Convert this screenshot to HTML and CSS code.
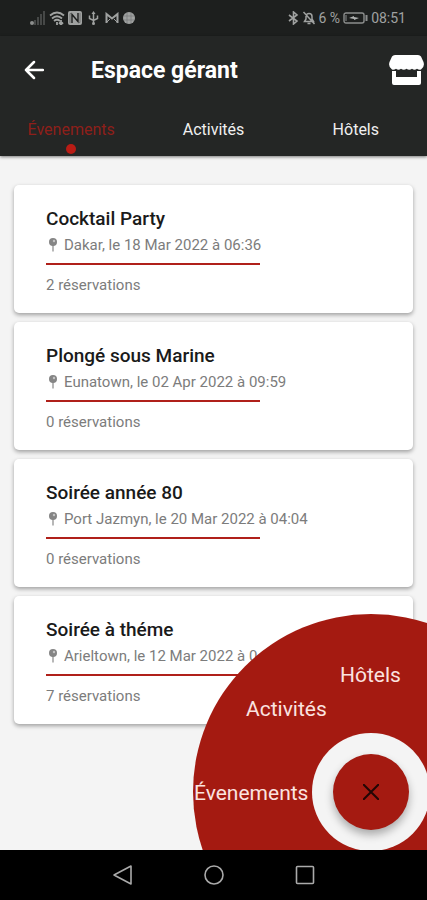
FILE: index.html
```html
<!DOCTYPE html>
<html lang="fr">
  <head>
    <meta charset="utf-8">
    <meta name="viewport" content="width=device-width, initial-scale=1">
    <title>Espace gérant</title>
    <link rel="stylesheet" href="styles.css">
  </head>
  <body>
    <div class="status-bar">
      <div class="status-group">
        <svg width="16" height="14" viewBox="0 0 16 14"><g fill="#464847"><rect x="4" y="9" width="2" height="5"/><rect x="7" y="6" width="2" height="8"/><rect x="10" y="3" width="2" height="11"/><rect x="13" y="0" width="2" height="14"/></g><circle cx="2" cy="12" r="2" fill="#8c8e8d"/></svg>
        <svg width="16" height="14" viewBox="0 0 16 14" fill="none" stroke="#a0a2a1" stroke-width="1.800"><path d="M1 4.500q7-6 14 0M3 7.500q5-4.500 10 0M5 10q3-2.500 6 0"/><path d="M8 11v3M12 9v4.500m-2-2 2 2 2-2"/></svg>
        <svg width="14" height="14" viewBox="0 0 14 14"><rect width="14" height="14" rx="2" fill="#a0a2a1"/><path d="M4 12V3.500l6 7V2" fill="none" stroke="#1d1f1e" stroke-width="1.400"/><path d="M2 12V2.500h2M12 2v9.500h-2" fill="none" stroke="#5c5e5d" stroke-width=".7"/></svg>
        <svg class="usb" width="11" height="14" viewBox="0 0 11 14" fill="none" stroke="#a0a2a1" stroke-width="1.500"><path d="M5.500 2v10M1.500 4.500v3l4 2 4-2v-3"/><path d="M3.500 3l2-3 2 3z" fill="#a0a2a1" stroke="none"/><circle cx="5.500" cy="12.500" r="1.500" fill="#a0a2a1" stroke="none"/></svg>
        <svg class="mail" width="14" height="12" viewBox="0 0 14 12" fill="none" stroke="#a0a2a1" stroke-width="2"><path d="M1.500 11V2L7 6.500 12.500 2v9"/><path d="M1 11l4-4M13 11L9 7" stroke-width="1"/></svg>
        <svg width="12" height="12" viewBox="0 0 12 12"><circle cx="6" cy="6" r="6" fill="#a0a2a1"/><path d="M1 4h10M1 8h10M4 1v10M8 1v10" stroke="#777978" stroke-width=".7"/></svg>
      </div>
      <div class="status-group">
        <svg width="11" height="14" viewBox="0 0 11 14" fill="none" stroke="#a0a2a1" stroke-width="1.600"><path d="M1 4l8 6-3.500 3V1L9 4l-8 6"/></svg>
        <svg width="14" height="14" viewBox="0 0 13 14" fill="none" stroke="#a0a2a1" stroke-width="1.500"><path d="M2 10.500h9L9.500 8V5.500a3 3 0 0 0-6 0V8zM5 12.500h3M1 1l11 12"/></svg>
        <span>6 %</span>
        <svg width="25" height="12" viewBox="0 0 25 12"><rect x="1" y="1" width="20" height="10" rx="2" fill="none" stroke="#8c8e8d" stroke-width="1.400"/><rect x="22.500" y="3" width="2" height="6" fill="#8c8e8d"/><path d="M6 6l5-2v1l5 1-5 2V7z" fill="#b0b2b1"/><path d="M3 3v6" stroke="#8c8e8d"/></svg>
        <span>08:51</span>
      </div>
    </div>

    <header class="app-header">
      <div class="title-row">
        <button class="back" aria-label="Retour">
          <svg width="20" height="20" viewBox="0 0 20 20" fill="none" stroke="#fff" stroke-width="2.500" stroke-linecap="round" stroke-linejoin="round"><path d="M19 10H2M10 2l-8 8 8 8"/></svg>
        </button>
        <h1>Espace gérant</h1>
        <button class="shop" aria-label="Boutique">
          <svg width="35" height="30" viewBox="0 0 35 30" fill="#fff"><path d="M6 0h23q2 0 3 1.500L34.500 7q1.500 5-2.500 7.500-2 .8-4-.8-2.500 2-5 0-2.700 2-5.500 0-2.700 2-5.500 0-2.500 2-5 0-2 1.600-4 .8Q-1 12 .5 7L3 1.500Q4 0 6 0z"/><path d="M3 16h4v6h21v-6h4v12q0 2-2 2H5q-2 0-2-2z"/></svg>
        </button>
      </div>
      <nav class="tabs">
        <a href="#evenements" class="active">Évenements</a>
        <a href="#activites">Activités</a>
        <a href="#hotels">Hôtels</a>
      </nav>
    </header>

    <main>
      <article class="card">
        <h2>Cocktail Party</h2>
        <p class="place"><svg width="10" height="14" viewBox="0 0 10 14"><path d="M5 7v6.500" stroke="#999" stroke-width="1.400"/><circle cx="5" cy="4" r="4" fill="#858585"/><circle cx="6" cy="3" r="1.200" fill="#c4c4c4"/></svg>Dakar, le 18 Mar 2022 à 06:36</p>
        <hr>
        <p>2 réservations</p>
      </article>
      <article class="card">
        <h2>Plongé sous Marine</h2>
        <p class="place"><svg width="10" height="14" viewBox="0 0 10 14"><path d="M5 7v6.500" stroke="#999" stroke-width="1.400"/><circle cx="5" cy="4" r="4" fill="#858585"/><circle cx="6" cy="3" r="1.200" fill="#c4c4c4"/></svg>Eunatown, le 02 Apr 2022 à 09:59</p>
        <hr>
        <p>0 réservations</p>
      </article>
      <article class="card">
        <h2>Soirée année 80</h2>
        <p class="place"><svg width="10" height="14" viewBox="0 0 10 14"><path d="M5 7v6.500" stroke="#999" stroke-width="1.400"/><circle cx="5" cy="4" r="4" fill="#858585"/><circle cx="6" cy="3" r="1.200" fill="#c4c4c4"/></svg>Port Jazmyn, le 20 Mar 2022 à 04:04</p>
        <hr>
        <p>0 réservations</p>
      </article>
      <article class="card">
        <h2>Soirée à théme</h2>
        <p class="place"><svg width="10" height="14" viewBox="0 0 10 14"><path d="M5 7v6.500" stroke="#999" stroke-width="1.400"/><circle cx="5" cy="4" r="4" fill="#858585"/><circle cx="6" cy="3" r="1.200" fill="#c4c4c4"/></svg>Arieltown, le 12 Mar 2022 à 0</p>
        <hr>
        <p>7 réservations</p>
      </article>

      <div class="wheel">
        <button class="wheel-item wheel-hotels">Hôtels</button>
        <button class="wheel-item wheel-activites">Activités</button>
        <button class="wheel-item wheel-evenements">Évenements</button>
        <div class="wheel-hub">
          <button class="close" aria-label="Fermer">
            <svg width="16" height="16" viewBox="0 0 16 16" stroke="#220605" stroke-width="2"><path d="M0 0l16 16M16 0L0 16"/></svg>
          </button>
        </div>
      </div>
    </main>

    <footer class="nav-bar">
      <button aria-label="Précédent"><svg width="20" height="20" viewBox="0 0 20 20" fill="none" stroke="#aaa" stroke-width="1.600" stroke-linejoin="round"><path d="M18 1v18L1 10z"/></svg></button>
      <button aria-label="Accueil"><svg width="20" height="20" viewBox="0 0 20 20" fill="none" stroke="#aaa" stroke-width="1.600"><circle cx="10" cy="10" r="9"/></svg></button>
      <button aria-label="Récents"><svg width="20" height="20" viewBox="0 0 20 20" fill="none" stroke="#aaa" stroke-width="1.600"><rect x="1.500" y="1.500" width="17" height="17" rx="1"/></svg></button>
    </footer>
  </body>
</html>
```

FILE: styles.css
```css
* {
  box-sizing: border-box;
}
body {
  margin: 0;
  min-height: 100vh;
  display: flex;
  flex-direction: column;
  background: #f4f4f4;
  font-family: Roboto, "Liberation Sans", sans-serif;
}
button {
  border: none;
  padding: 0;
  background: none;
  font: inherit;
  color: inherit;
  cursor: pointer;
}
svg {
  display: block;
  flex: none;
}
h1, h2, p {
  margin: 0;
}

/* status bar */
.status-bar {
  display: flex;
  justify-content: space-between;
  align-items: center;
  height: 36px;
  padding: 0 21px 0 30px;
  background: #1d1f1e;
  color: #a0a2a1;
  font-size: 14px;
}
.status-group {
  display: flex;
  align-items: center;
  gap: 3px;
}
.usb {
  margin: 0 3px;
}
.mail {
  margin-right: 1px;
}

/* header */
.app-header {
  height: 120px;
  display: flex;
  flex-direction: column;
  background: #242625;
  color: #fff;
  box-shadow: 0 1px 3px rgba(0, 0, 0, .5);
}
.title-row {
  display: flex;
  align-items: center;
  height: 68px;
  padding: 0 3px 0 24px;
}
.title-row h1 {
  flex: 1;
  margin-left: 47px;
  font-size: 23px;
  font-weight: 700;
}
.tabs {
  display: grid;
  grid-template-columns: repeat(3, 1fr);
  flex: 1;
}
.tabs a {
  display: flex;
  flex-direction: column;
  align-items: center;
  padding-top: 16px;
  color: #f0f0f0;
  font-size: 16px;
  line-height: 20px;
  text-decoration: none;
}
.tabs .active {
  color: #8e1f1a;
}
.tabs .active::after {
  content: "";
  width: 10px;
  height: 10px;
  margin-top: 4px;
  border-radius: 50%;
  background: #b91c15;
}

/* list */
main {
  position: relative;
  flex: 1;
  display: flex;
  flex-direction: column;
  gap: 9px;
  padding: 29px 14px;
  overflow: hidden;
}
.card {
  height: 128px;
  padding: 22px 32px;
  border-radius: 5px;
  background: #fff;
  box-shadow: 0 2px 4px rgba(0, 0, 0, .35);
  color: #7c7c7c;
  font-size: 15px;
  line-height: 20px;
}
.card h2 {
  color: #1a1a1a;
  font-size: 19px;
  font-weight: 500;
  line-height: 24px;
}
.place {
  display: flex;
  align-items: center;
  gap: 6px;
  padding: 4px 0 0 2px;
  white-space: nowrap;
}
.card hr {
  width: 64%;
  height: 2px;
  margin: 8px 0 10px;
  border: none;
  background: #b0201a;
}

/* round menu */
.wheel {
  position: absolute;
  right: -122px;
  bottom: -120px;
  display: grid;
  place-items: center;
  width: 356px;
  height: 356px;
  border-radius: 50%;
  background: #a41a11;
}
.wheel-item {
  position: absolute;
  color: #fbe3e0;
  font-size: 21px;
  line-height: 26px;
}
.wheel-hotels {
  left: 147px;
  top: 48px;
}
.wheel-activites {
  left: 53px;
  top: 82px;
}
.wheel-evenements {
  left: 1px;
  top: 166px;
}
.wheel-hub {
  display: grid;
  place-items: center;
  width: 118px;
  height: 118px;
  border-radius: 50%;
  background: #f4f4f4;
}
.close {
  display: grid;
  place-items: center;
  width: 76px;
  height: 76px;
  border-radius: 50%;
  background: #a41a11;
  box-shadow: 0 5px 9px rgba(0, 0, 0, .3);
}

/* system navigation */
.nav-bar {
  display: flex;
  justify-content: center;
  align-items: center;
  gap: 71px;
  height: 50px;
  background: #000;
}
```
